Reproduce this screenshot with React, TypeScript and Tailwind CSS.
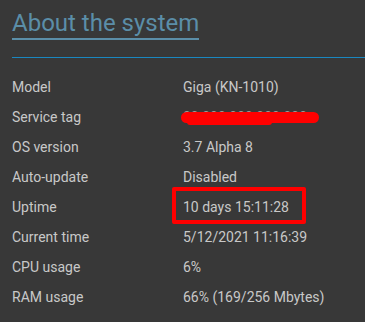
const rows: [string, string][] = [
  ["Model", "Giga (KN-1010)"],
  ["Service tag", "SERVICE"],
  ["OS version", "3.7 Alpha 8"],
  ["Auto-update", "Disabled"],
  ["Uptime", "10 days 15:11:28"],
  ["Current time", "5/12/2021 11:16:39"],
  ["CPU usage", "6%"],
  ["RAM usage", "66% (169/256 Mbytes)"],
];

export default function App() {
  return (
    <div
      className="w-[365px] h-[322px] bg-[#383838] pl-[12px] overflow-hidden"
      style={{ fontFamily: "Roboto, 'Liberation Sans', sans-serif" }}
    >
      <div className="pt-[9px]">
        <h1 className="inline-block text-[24px] leading-[28px] text-[#5b8ea8] pb-[1px] border-b-2 border-[#5b8ea8]">
          About the system
        </h1>
      </div>
      <div className="mt-[17px] border-t border-[#1a87c0]" />
      <div className="mt-[14px] text-[14px] text-[#c8c8c8]">
        {rows.map(([label, value]) => (
          <div key={label} className="flex h-[30px] items-center">
            <div className="w-[171px] shrink-0">{label}</div>
            {label === "Service tag" ? (
              <div className="relative">
                <span className="text-[#9a9a9a]">00 000 000 000 000</span>
                <span className="absolute left-[-2px] top-[5px] h-[11px] w-[138px] rounded-full bg-[#ff0000]" />
                <span className="absolute left-[4px] top-[12px] h-[6px] w-[85px] rounded-full bg-[#ff0000]" />
              </div>
            ) : label === "Uptime" ? (
              <div className="relative">
                {value}
                <span className="absolute left-[-11px] top-[-10px] h-[37px] w-[134px] border-4 border-[#ff0000] rounded-[2px]" />
              </div>
            ) : (
              <div>{value}</div>
            )}
          </div>
        ))}
      </div>
    </div>
  );
}
